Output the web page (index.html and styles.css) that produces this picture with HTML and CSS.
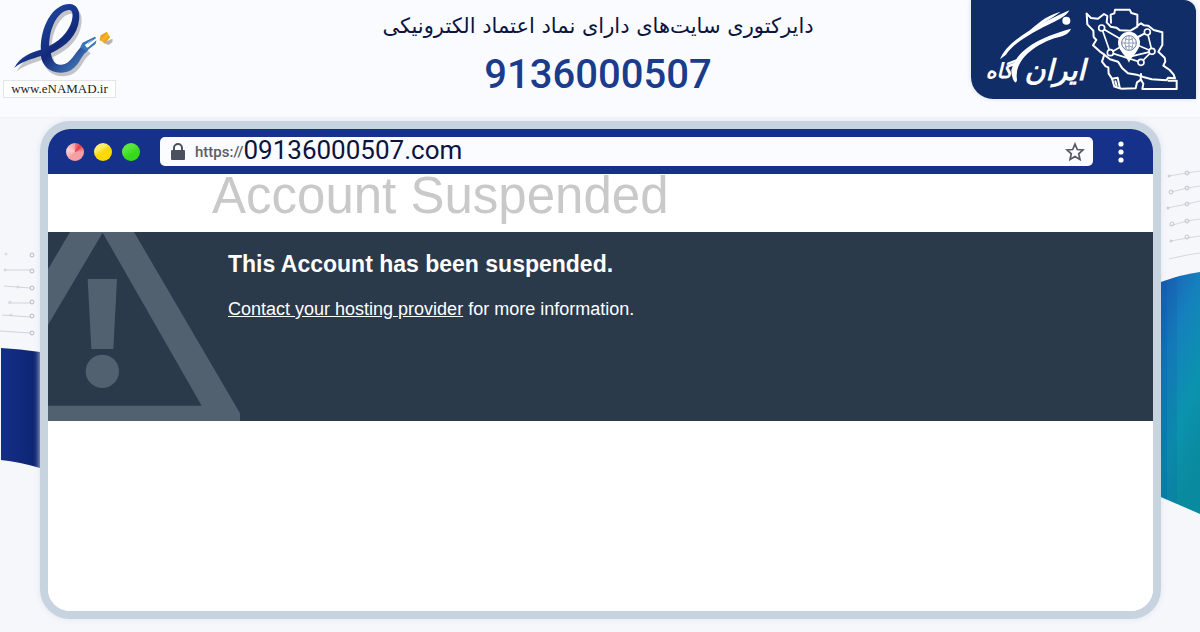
FILE: index.html
```html
<!DOCTYPE html>
<html lang="fa">
<head>
  <meta charset="UTF-8" />
  <meta name="viewport" content="width=device-width, initial-scale=1" />
  <title>9136000507</title>
  <link rel="stylesheet" href="styles.css">
</head>
<body>
  <header class="header">
    <div class="enamad">
      <svg class="enamad-mark" viewBox="0 0 350 240" aria-hidden="true">
        <defs>
          <linearGradient id="blue" x1="0" y1="0" x2="1" y2="1">
            <stop offset="0" stop-color="#10246e"/>
            <stop offset=".35" stop-color="#1c3f96"/>
            <stop offset=".6" stop-color="#12297a"/>
            <stop offset="1" stop-color="#4f8fcb"/>
          </linearGradient>
          <linearGradient id="gold" x1="0" y1="0" x2="1" y2="1">
            <stop offset="0" stop-color="#d9711c"/>
            <stop offset=".5" stop-color="#f8b51f"/>
            <stop offset="1" stop-color="#c98a3c"/>
          </linearGradient>
        </defs>
        <g fill="#c3c3c8" transform="translate(7 11)">
          <path fill-rule="evenodd" d="M42 204C60 168 95 157 122 149C120 85 155 12 208 12C230 12 240 32 237 58C232 105 200 138 152 160C156 184 166 196 184 194C213 192 221 160 248 136L265 149L256 158C240 169 232 218 181 218C147 218 126 195 122 168C95 177 67 183 42 204ZM147 138C188 118 214 83 217 50C218 36 214 29 205 30C172 34 147 85 147 138Z"/>
        </g>
        <path fill="url(#blue)" fill-rule="evenodd" d="M42 204C60 168 95 157 122 149C120 85 155 12 208 12C230 12 240 32 237 58C232 105 200 138 152 160C156 184 166 196 184 194C213 192 221 160 248 136L259 144L265 149L256 158C240 169 232 218 181 218C147 218 126 195 122 168C95 177 67 183 42 204ZM147 138C188 118 214 83 217 50C218 36 214 29 205 30C172 34 147 85 147 138Z"/>
        <path fill="#3774b8" d="M240 142L247 128L284 110L288 114L262 133L266 140L289 121L286 132L258 154Z"/>
        <path fill="#fff" d="M254 135L279 117L263 132L267 140L260 143Z"/>
        <path fill="#b9b3ae" d="M307 128L337 116L337 126L326 135Z"/>
        <path fill="url(#gold)" d="M302 106L320 95L330 112L315 129L298 121Z"/>
      </svg>
      <a class="enamad-link" href="#">www.eNAMAD.ir</a>
    </div>
    <div class="heading">
      <p class="tagline" dir="rtl">دایرکتوری سایت‌های دارای نماد اعتماد الکترونیکی</p>
      <h1 class="site-name">9136000507</h1>
    </div>
    <a class="brand" href="#" aria-label="ایرانگاه">
      <svg class="brand-art" viewBox="33 0 675 297" aria-hidden="true">
        <g fill="#fff">
          <path d="M120 178C138 132 200 88 328 31C322 43 310 52 286 64C212 99 157 133 138 164Z"/>
          <path d="M210 91C242 61 270 43 302 35C278 53 248 71 210 91Z"/>
          <path d="M154 211C168 150 240 111 333 86C325 105 309 108 283 115C217 138 168 181 170 231C175 256 157 254 154 211Z"/>
          <circle cx="319" cy="62" r="12"/>
          <text class="brand-word" x="376" y="240">ایران</text>
          <text class="brand-word brand-word-small" x="158" y="234">گاه</text>
        </g>
        <g fill="none" stroke="#fff" stroke-width="6" stroke-linejoin="round" stroke-linecap="round">
          <path d="M380 41L393 54L414 56L432 42L442 48L440 67L452 80L469 83L480 91L512 92L532 80L532 44L514 39L509 29L465 29L463 40L452 44L453 68"/>
          <path d="M380 41L382 73L400 92L401 111L409 120L399 136L419 154L433 164L426 185L437 199L445 202L446 221L456 236L463 260L479 265L485 266L527 265L531 247L543 239L550 251L547 267L650 267L650 242L625 242"/>
          <path d="M533 76L543 70L552 76L565 77L581 90L607 97L607 135L595 155L614 173L616 184L610 197L629 210L641 224L645 235L624 233L619 241L575 238L550 231L530 224L504 220L487 205L474 185L450 178L433 164"/>
          <path d="M456 236L473 233L479 262M466 244L470 258M542 239L543 222"/>
        </g>
        <g fill="none" stroke="#fff" stroke-width="5">
          <path d="M425 84L451 158L502 129L425 84M451 158L543 187L576 154L562 96L510 126L576 154M502 126L562 96M510 170L576 154"/>
        </g>
        <g fill="#112d67" stroke="#fff" stroke-width="5">
          <circle cx="425" cy="84" r="9"/>
          <circle cx="451" cy="158" r="9"/>
          <circle cx="562" cy="96" r="9"/>
          <circle cx="576" cy="154" r="9"/>
          <circle cx="543" cy="187" r="9"/>
        </g>
        <path fill="#fff" d="M507 188C498 166 474 151 474 128A33 33 0 0 1 540 128C540 151 516 166 507 188Z"/>
        <g fill="none" stroke="#66789d" stroke-width="3">
          <circle cx="507" cy="129" r="22"/>
          <path d="M507 108V150M486 129H528M494 116Q507 124 520 116M494 142Q507 134 520 142M499 112Q490 129 499 147M515 112Q524 129 515 147" stroke-width="2"/>
        </g>
      </svg>
    </a>
  </header>

  <main class="stage">
    <svg class="side" viewBox="0 0 40 511" preserveAspectRatio="none" aria-hidden="true">
      <defs>
        <linearGradient id="navy">
          <stop offset="0" stop-color="#142f86"/>
          <stop offset="1" stop-color="#0d2371"/>
        </linearGradient>
      </defs>
      <g fill="none" stroke="#d0d3dc">
        <path d="M4 149H30M4 165L17 166L30 167M8 182H30M2 194L30 196M0 210L30 212"/>
        <circle cx="6" cy="133" r="1"/>
        <circle cx="5" cy="149" r="1"/>
        <circle cx="18" cy="166" r="1"/>
        <circle cx="10" cy="181" r="1"/>
        <circle cx="11" cy="194" r="1"/>
        <g stroke="#b4b8c4">
          <circle cx="32" cy="134" r="2"/>
          <circle cx="32" cy="150" r="2"/>
          <circle cx="32" cy="167" r="2"/>
          <circle cx="32" cy="181" r="2"/>
          <circle cx="32" cy="195" r="2"/>
          <circle cx="32" cy="212" r="2"/>
        </g>
      </g>
      <path fill="url(#navy)" d="M1 227Q20 228 40 231V347Q20 341 1 339Z"/>
    </svg>

    <section class="browser" dir="ltr">
      <div class="titlebar">
        <div class="lights">
          <span class="light light-red"></span>
          <span class="light light-yellow"></span>
          <span class="light light-green"></span>
        </div>
        <div class="address">
          <svg class="lock" viewBox="0 0 14 17" aria-hidden="true">
            <path d="M3 8V5a4 4 0 0 1 8 0v3" fill="none" stroke="#4b5060" stroke-width="2"/>
            <rect x="0" y="7" width="14" height="10" rx="1" fill="#4b5060"/>
          </svg>
          <label class="scheme" for="url">https://</label>
          <input class="url" id="url" type="text" value="09136000507.com" spellcheck="false">
          <button class="icon-btn" type="button" aria-label="Bookmark">
            <svg width="20" height="20" viewBox="0 0 20 20">
              <path d="M10 2L12.300 7.500L18 8L13.700 11.800L15 17.500L10 14.500L5 17.500L6.300 11.800L2 8L7.700 7.500Z" fill="none" stroke="#555a66" stroke-width="1.700"/>
            </svg>
          </button>
        </div>
        <button class="icon-btn" type="button" aria-label="Menu">
          <svg width="20" height="24" viewBox="0 0 20 24" fill="#fff">
            <circle cx="10" cy="4" r="2.600"/>
            <circle cx="10" cy="12" r="2.600"/>
            <circle cx="10" cy="20" r="2.600"/>
          </svg>
        </button>
      </div>

      <div class="page" lang="en">
        <h2 class="page-title">Account Suspended</h2>
        <div class="notice">
          <svg class="warning" viewBox="144 36 576 567" aria-hidden="true">
            <path d="M210 36H402L720 580V603H144V557H605L308 38L144 315V148Z"/>
            <path d="M263 177H351L340 387H274Z"/>
            <circle cx="307" cy="454" r="50"/>
          </svg>
          <div class="notice-text">
            <h3>This Account has been suspended.</h3>
            <p><a href="#">Contact your hosting provider</a> for more information.</p>
          </div>
        </div>
      </div>
    </section>

    <svg class="side" viewBox="0 0 39 511" preserveAspectRatio="none" aria-hidden="true">
      <defs>
        <linearGradient id="teal" x1="0" y1="0" x2=".4" y2="1">
          <stop offset="0" stop-color="#1c5bb5"/>
          <stop offset=".35" stop-color="#1580bd"/>
          <stop offset=".7" stop-color="#0b93ae"/>
          <stop offset="1" stop-color="#0a8a9e"/>
        </linearGradient>
      </defs>
      <g fill="none" stroke="#d6d8e1">
        <path d="M8 55L26 52L39 50M10 71L26 67L39 65M6 87L26 83L39 80M8 105L26 100L39 98M10 120L26 117L39 115M8 138L26 134L39 132"/>
        <g stroke="#c3c6d1">
          <circle cx="8" cy="55" r="1"/>
          <circle cx="10" cy="71" r="2"/>
          <circle cx="7" cy="87" r="1"/>
          <circle cx="11" cy="103" r="2"/>
          <circle cx="10" cy="120" r="1"/>
          <circle cx="26" cy="52" r="2"/>
          <circle cx="26" cy="67" r="2"/>
          <circle cx="26" cy="83" r="2"/>
          <circle cx="26" cy="100" r="2"/>
          <circle cx="26" cy="116" r="2"/>
        </g>
      </g>
      <path fill="url(#teal)" d="M0 161Q22 153 39 151V393L0 376Z"/>
      <path fill="#0b4f9c" opacity=".3" d="M0 161L6 159V379L0 376Z"/>
      <path fill="#0b4f9c" opacity=".15" d="M6 159L16 156V383L6 379Z"/>
    </svg>
  </main>
</body>
</html>
```

FILE: styles.css
```css
* {
  box-sizing: border-box;
}
body {
  margin: 0;
  min-height: 100vh;
  background: #f5f7fb;
  font-family: Roboto, "DejaVu Sans", sans-serif;
}
h1, h2, h3, p {
  margin: 0;
}

/* header */
.header {
  display: grid;
  grid-template-columns: 225px 1fr 225px;
  align-items: start;
  padding-right: 4px;
  height: 118px;
  background: #fafbfe;
  border-bottom: 1px solid #f0f2f7;
}
.enamad {
  display: flex;
  flex-direction: column;
  align-items: flex-start;
  padding-left: 3px;
}
.enamad-mark {
  width: 117px;
  height: 80px;
  margin-left: -3px;
}
.enamad-link {
  width: 113px;
  border: 1px solid #e3e4e8;
  background: #fff;
  color: #222;
  font: 13px/16px "Liberation Serif", serif;
  text-align: center;
  text-decoration: none;
}
.heading {
  padding-top: 9px;
  text-align: center;
}
.tagline {
  color: #0b1440;
  font: 21px/34px "DejaVu Sans", sans-serif;
}
.site-name {
  color: #1b3c8c;
  font-size: 40px;
  font-weight: 500;
  line-height: 64px;
}
.brand {
  display: block;
  height: 99px;
  background: #112d67;
  border-radius: 0 12px 0 22px;
  box-shadow: 0 0 4px #d5dbe8;
}
.brand-art {
  display: block;
  width: 225px;
  height: 99px;
}
.brand-word {
  font: italic bold 86px "DejaVu Sans", sans-serif;
  direction: rtl;
}
.brand-word-small {
  font-size: 62px;
}

/* browser window with the ribbons on both sides */
.stage {
  display: grid;
  grid-template-columns: 40px 1fr 39px;
  padding-top: 3px;
}
.side {
  display: block;
  width: 100%;
  height: 511px;
}
.browser {
  align-self: start;
  overflow: hidden;
  background: #fff;
  border: 8px solid #c8d3e0;
  border-radius: 30px;
  box-shadow: 0 0 6px #dfe5ee;
}
.titlebar {
  display: flex;
  align-items: center;
  gap: 18px;
  height: 45px;
  padding: 0 22px 0 18px;
  background: #15318a;
}
.lights {
  display: flex;
  gap: 10px;
  margin-right: 2px;
}
.light {
  width: 18px;
  height: 18px;
  border-radius: 50%;
}
.light-red {
  background: conic-gradient(#f08088, #e8394c 12%, #f08088 20%, #f7a0a4 25% 60%, #ffd0d0 80%, #f7a0a4);
}
.light-yellow {
  background: linear-gradient(150deg, #ffed70 30%, #fcd900 50%);
}
.light-green {
  background: linear-gradient(150deg, #5ce83c 30%, #37da1b 60%);
}
.address {
  display: flex;
  flex: 1;
  align-items: center;
  height: 29px;
  padding: 0 8px 0 11px;
  background: #fbfcff;
  border-radius: 5px;
}
.lock {
  width: 14px;
  height: 17px;
  margin-right: 10px;
}
.scheme {
  color: #5a5d66;
  font-size: 15px;
  font-weight: 500;
}
.url {
  flex: 1;
  min-width: 0;
  height: 29px;
  padding: 0 0 3px;
  border: 0;
  outline: 0;
  background: none;
  color: #0b1440;
  font: 26px Roboto, sans-serif;
}
.icon-btn {
  display: flex;
  padding: 0;
  border: 0;
  background: none;
  cursor: pointer;
}

/* hosted page */
.page {
  min-height: 437px;
  background: #fff;
  font-family: "Liberation Sans", Arial, sans-serif;
}
.page-title {
  height: 58px;
  padding-left: 164px;
  color: #c9c9c9;
  font-size: 51px;
  font-weight: 400;
  line-height: 44px;
}
.notice {
  display: flex;
  min-height: 189px;
  background: #2a3a4b;
  color: #fff;
}
.warning {
  width: 192px;
  height: 189px;
  margin-right: -12px;
  fill: #526170;
}
.notice-text {
  padding-top: 18px;
}
.notice-text h3 {
  font-size: 23px;
  line-height: 28px;
}
.notice-text p {
  margin-top: 19px;
  font-size: 18px;
  line-height: 24px;
}
.notice-text a {
  color: #fff;
}
```
